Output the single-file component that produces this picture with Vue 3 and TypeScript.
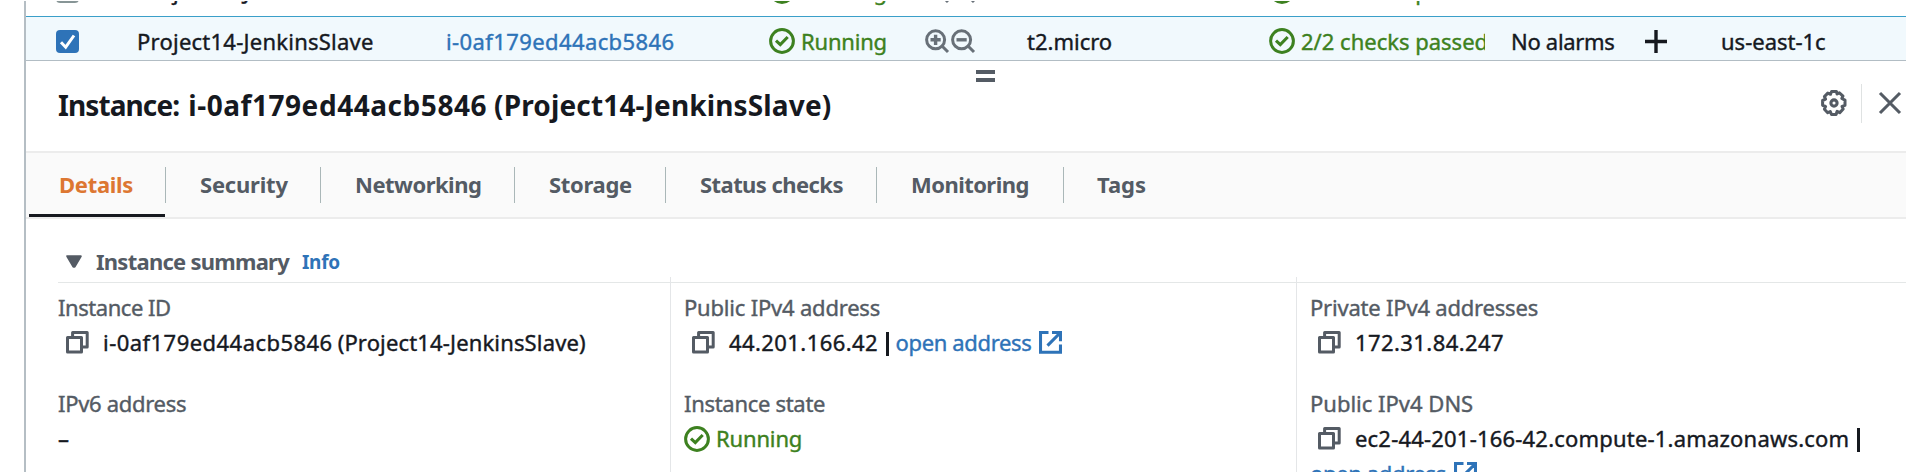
<script setup lang="ts">
interface Row { id: number; name: string; instance: string; selected: boolean }
const rows: Row[] = [
  { id: 1, name: 'Project14-Jenkins', instance: 'i-0af179ed44acb5846', selected: false },
  { id: 2, name: 'Project14-JenkinsSlave', instance: 'i-0af179ed44acb5846', selected: true },
]
const tabs = [
  { label: 'Details', key: 'details' },
  { label: 'Security', key: 'security' },
  { label: 'Networking', key: 'networking' },
  { label: 'Storage', key: 'storage' },
  { label: 'Status checks', key: 'checks' },
  { label: 'Monitoring', key: 'monitoring' },
  { label: 'Tags', key: 'tags' },
]
</script>

<template>
  <svg class="sprite" aria-hidden="true">
    <symbol id="check" viewBox="0 0 26 26">
      <circle cx="13" cy="13" r="11.4" fill="none" stroke="currentColor" stroke-width="3" />
      <path d="M7 12.6l4.3 4 7.4-7.6" fill="none" stroke="currentColor" stroke-width="3.1" />
    </symbol>
    <symbol id="copy" viewBox="0 0 23 23">
      <path d="M1.5 6.5h14v14.6h-14z M6.6 6V1.6h14.6v14.4h-5" fill="none" stroke="currentColor" stroke-width="3" stroke-linejoin="round" />
    </symbol>
    <symbol id="external" viewBox="0 0 23 23">
      <path d="M9.5 1.5h-8v19.7h20V13.5M13 1.5h8.5v8.7M21 2L8.5 14.6" fill="none" stroke="currentColor" stroke-width="3.1" />
    </symbol>
  </svg>
  <div class="screen">
    <div class="panel">
      <div class="table">
        <div v-for="row in rows" :key="row.id" class="row" :class="{ selected: row.selected }">
          <span class="cell c-box">
            <span class="box"><svg v-if="row.selected" viewBox="0 0 23 23"><path d="M5 12.3l4.7 4.9L18 5.5" fill="none" stroke="#fff" stroke-width="3" /></svg></span>
          </span>
          <span class="cell text c-name">{{ row.name }}</span>
          <span class="cell text c-id link">{{ row.instance }}</span>
          <span class="cell c-state ok"><svg class="status"><use href="#check" /></svg><span class="text">Running</span></span>
          <span class="cell c-zoom">
            <svg viewBox="0 0 24 24"><g fill="none" stroke="currentColor" stroke-width="3"><circle cx="10.6" cy="10.8" r="9" /><path d="M17 17l6 6" /><path d="M5.5 10.8h10.2M10.6 5.7v10.2" stroke-width="3.4" /></g></svg>
            <svg viewBox="0 0 24 24"><g fill="none" stroke="currentColor" stroke-width="3"><circle cx="10.6" cy="10.8" r="9" /><path d="M17 17l6 6" /><path d="M5.5 10.8h10.2" stroke-width="3.4" /></g></svg>
          </span>
          <span class="cell text c-type">t2.micro</span>
          <span class="cell c-checks ok"><svg class="status"><use href="#check" /></svg><span class="text">2/2 checks passed</span></span>
          <span class="cell text c-alarm">No alarms</span>
          <span class="cell c-plus"><svg v-if="row.selected" viewBox="0 0 22 23"><path d="M0 11.5h22M11 0v23" stroke="currentColor" stroke-width="3.4" /></svg></span>
          <span class="cell text c-zone">us-east-1c</span>
        </div>
      </div>

      <header class="head">
        <div class="grip"><i /><i /></div>
        <h2><span class="t-a">Instance:</span><span class="t-b">i-0af179ed44acb5846</span><span class="t-c">(Project14-JenkinsSlave)</span></h2>
        <div class="tools">
          <svg class="gear" viewBox="0 0 26 26">
            <path d="M10.6 1.5h4.8l.7 2.5 2.3-1.2 3.6 3.3-1.2 2.4 3.2 1.6v5.2l-3 1 1.2 2.7-3.4 3.6-2.7-1.3-1 3.2h-4.6l-1.2-3-2.6 1.2-3.3-3.5 1.2-2.7-3-1.2v-4.8l3-1.3-1.2-2.6 3.4-3.5 2.7 1.2z" fill="none" stroke="currentColor" stroke-width="3" stroke-linejoin="round" />
            <circle cx="13" cy="13" r="3.1" fill="none" stroke="currentColor" stroke-width="3.1" />
          </svg>
          <span class="bar" />
          <svg class="close" viewBox="0 0 22 22"><path d="M1 1l20 20M21 1L1 21" stroke="currentColor" stroke-width="3.1" /></svg>
        </div>
      </header>

      <nav class="tabs">
        <a v-for="(tab, i) in tabs" :key="tab.key" class="tab" :class="[tab.key, { active: i === 0 }]"><span>{{ tab.label }}</span></a>
      </nav>

      <section class="summary">
        <h3>
          <svg class="caret" viewBox="0 0 16 13"><path d="M1.2 1.2h13.6L8.6 11.8H7.4z" fill="currentColor" stroke="currentColor" stroke-width="2" stroke-linejoin="round" /></svg>
          <span class="heading">Instance summary</span><span class="info">Info</span>
        </h3>
        <div class="grid">
          <div class="col">
            <div class="item">
              <div class="label l-id">Instance ID</div>
              <div class="value"><svg class="copy"><use href="#copy" /></svg><span class="text v-id">i-0af179ed44acb5846</span><span class="text v-name">(Project14-JenkinsSlave)</span></div>
            </div>
            <div class="item">
              <div class="label l-six">IPv6 address</div>
              <div class="value text">–</div>
            </div>
          </div>
          <div class="col ruled">
            <div class="item">
              <div class="label l-pub">Public IPv4 address</div>
              <div class="value"><svg class="copy"><use href="#copy" /></svg><span class="text v-ip">44.201.166.42</span><span class="pipe" /><span class="text link open">open address</span><svg class="ext"><use href="#external" /></svg></div>
            </div>
            <div class="item">
              <div class="label l-state">Instance state</div>
              <div class="value ok v-run"><svg class="status"><use href="#check" /></svg><span class="text">Running</span></div>
            </div>
          </div>
          <div class="col ruled">
            <div class="item">
              <div class="label l-priv">Private IPv4 addresses</div>
              <div class="value"><svg class="copy"><use href="#copy" /></svg><span class="text v-ip">172.31.84.247</span></div>
            </div>
            <div class="item">
              <div class="label">Public IPv4 DNS</div>
              <div class="value"><svg class="copy"><use href="#copy" /></svg><span class="text v-dns">ec2-44-201-166-42.compute-1.amazonaws.com</span><span class="pipe" /></div>
              <div class="value"><span class="text link open">open address</span><svg class="ext"><use href="#external" /></svg></div>
            </div>
          </div>
        </div>
      </section>
    </div>
  </div>
</template>

<style>
html, body { margin: 0; background: #fff; overflow: hidden; }
</style>

<style scoped>
.sprite { position: absolute; width: 0; height: 0; }
.screen { box-sizing: border-box; width: 1906px; height: 472px; padding: 1px 0 0 24px; overflow: hidden; background: #fff; color: #16191f; font: 22px/30px "Noto Sans", "Open Sans", sans-serif; white-space: nowrap; -webkit-text-stroke: 0.4px currentColor; }
.panel { box-sizing: border-box; width: 1882px; height: 471px; border-left: 2px solid #b5bec4; overflow: hidden; }
svg { display: block; flex: none; overflow: visible; }
.table { box-sizing: border-box; height: 60px; margin-left: -2px; overflow: hidden; border-bottom: 1px solid #b2bdc4; }
.row { box-sizing: border-box; height: 50px; display: flex; align-items: center; border-left: 2px solid #b5bec4; }
.row:first-child { margin-top: -35px; }
.row.selected { background: #f1f9fd; border-left-color: #4b9cc4; box-shadow: inset 0 1px #3a9fc9; }
.cell { display: flex; align-items: center; flex: none; height: 30px; }
.text { padding-bottom: 1px; }
.c-box { width: 111px; }
.box { box-sizing: border-box; width: 23px; height: 23px; margin: 1px 0 0 30px; border: 2px solid #879596; border-radius: 4px; }
.selected .box { border: 0; background: #2e73b8; }
.c-name { width: 309px; letter-spacing: 0.24px; }
.c-id { width: 323px; letter-spacing: 0.4px; }
.c-state { width: 156px; letter-spacing: -0.2px; }
.c-zoom { width: 102px; gap: 2px; color: #687078; }
.c-zoom svg { width: 24px; height: 24px; }
.c-type { width: 242px; }
.c-checks { width: 216px; margin-right: 26px; overflow: hidden; }
.c-alarm { width: 134px; letter-spacing: -0.3px; }
.c-plus { width: 76px; }
.c-plus svg { width: 22px; height: 23px; }
.status { width: 26px; height: 26px; margin-right: 6px; }
.ok { color: #3d8120; }
.link { color: #2e73b8; }
.head { box-sizing: border-box; height: 90px; position: relative; display: flex; align-items: center; justify-content: space-between; padding: 0 5px 0 32px; }
.grip { position: absolute; left: 950px; top: 9px; width: 19px; display: grid; gap: 4px; }
.grip i { height: 4px; background: #545b64; }
h2 { display: flex; margin: -3px 0 0; font-size: 28px; line-height: 40px; font-weight: 700; -webkit-text-stroke: 0; }
.t-a { letter-spacing: -0.9px; margin-right: 9px; }
.t-b { letter-spacing: 0.55px; margin-right: 7px; }
.t-c { letter-spacing: 0.14px; }
.tools { display: flex; align-items: center; color: #545b64; margin-top: -6px; }
.gear { width: 26px; height: 26px; margin-right: 14px; }
.bar { width: 1px; height: 39px; background: #dfe2e2; margin-right: 17px; }
.close { width: 22px; height: 22px; }
.tabs { box-sizing: border-box; height: 68px; background: #fafafa; border-top: 2px solid #ececec; border-bottom: 2px solid #ececec; padding-left: 3px; display: flex; font-weight: 700; color: #545b64; -webkit-text-stroke: 0; }
.tab { box-sizing: border-box; height: 64px; display: flex; align-items: center; padding: 0 0 3px 34px; position: relative; }
.tab:not(:last-child)::after { content: ""; position: absolute; right: 0; top: 14px; width: 1.5px; height: 36px; background: #aab7b8; }
.tab.active { padding-left: 30px; color: #dd7732; }
.tab.active::before { content: ""; position: absolute; left: 0; right: 1px; bottom: 0; height: 3px; background: #16191f; }
.details { width: 137px; letter-spacing: -0.3px; }
.security { width: 155px; letter-spacing: -0.2px; }
.networking { width: 194px; letter-spacing: -0.5px; }
.storage { width: 151px; letter-spacing: -0.3px; }
.checks { width: 211px; letter-spacing: -0.57px; }
.monitoring { width: 187px; letter-spacing: -0.55px; }
.tags.tab { padding-left: 33px; }
h3 { height: 64px; margin: 0 0 0 32px; box-sizing: border-box; padding: 20px 0 0 8px; display: flex; align-items: center; border-bottom: 1px solid #e4e7e7; font-size: 22px; line-height: 30px; color: #545b64; -webkit-text-stroke: 0; }
.caret { width: 16px; height: 13px; margin: 1px 14px 0 0; }
.heading { letter-spacing: -0.75px; }
.info { font-size: 19px; color: #2e73b8; margin: 2px 0 0 13px; letter-spacing: -0.25px; }
.grid { display: grid; grid-template-columns: 612px 626px 1fr; margin: -6px 0 0 32px; }
.col { box-sizing: border-box; height: 230px; padding-top: 10px; }
.ruled { border-left: 1px solid #e4e6e8; padding-left: 13px; }
.item { height: 97px; padding-top: 5px; box-sizing: border-box; }
.item + .item { margin-top: -1px; padding-top: 5px; }
.label { color: #545b64; height: 33px; }
.value { display: flex; align-items: center; height: 35px; box-sizing: border-box; }
.l-id { letter-spacing: -0.45px; }
.l-six, .l-state { letter-spacing: -0.3px; }
.l-pub, .l-priv { letter-spacing: -0.2px; }
.v-id { letter-spacing: 0.46px; margin-right: 5px; }
.v-name { letter-spacing: 0.15px; }
.v-ip { letter-spacing: 0.42px; }
.v-dns { letter-spacing: 0.2px; }
.v-run { letter-spacing: -0.15px; }
.open { letter-spacing: -0.35px; }
.copy { width: 23px; height: 23px; margin: 0 14px 0 8px; color: #545b64; }
.ext { width: 23px; height: 23px; margin-left: 8px; color: #2e73b8; }
.pipe { width: 2.5px; height: 24px; background: #16191f; margin: 3px 7px 0 8px; }
</style>
